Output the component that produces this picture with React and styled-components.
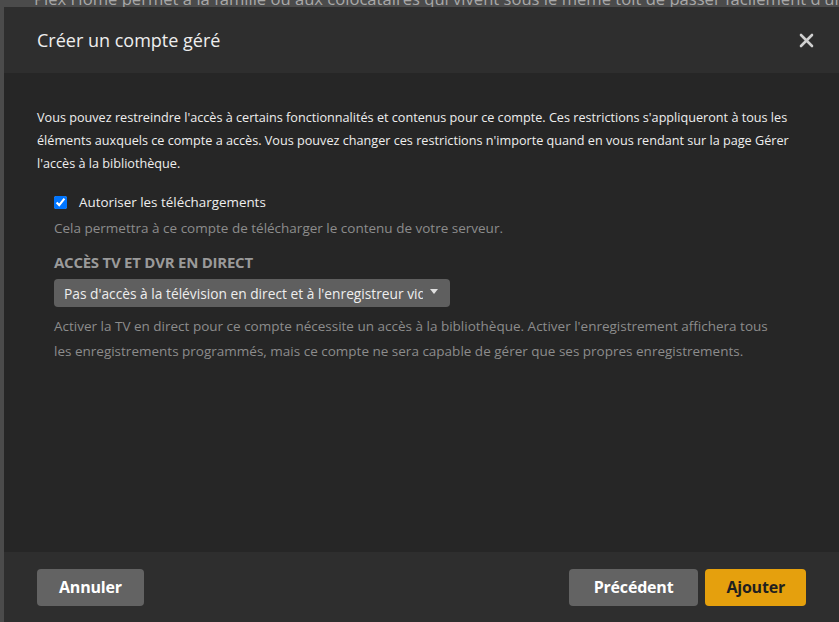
import styled, { createGlobalStyle } from "styled-components";

const GlobalStyle = createGlobalStyle`
  html, body {
    margin: 0;
    padding: 0;
    background: #4b4b4b;
    overflow: hidden;
  }
  body {
    font-family: "Open Sans", "Noto Sans", sans-serif;
  }
`;

const Page = styled.div`
  width: 839px;
  height: 622px;
  display: flex;
  flex-direction: column;
  background: #4b4b4b;
  overflow: hidden;
`;

const Backdrop = styled.div`
  height: 7px;
  overflow: hidden;
  padding-left: 34px;
  color: #a8a8a8;
  font-size: 16.6px;
  line-height: 16px;
  white-space: nowrap;

  span {
    display: block;
    margin-top: -9px;
  }
`;

const Modal = styled.div`
  flex: 1;
  margin-left: 4px;
  display: flex;
  flex-direction: column;
  background: #262626;
  min-height: 0;
`;

const Header = styled.div`
  height: 66px;
  flex-shrink: 0;
  display: flex;
  align-items: center;
  justify-content: space-between;
  padding: 0 24px 0 33px;
  background: #2e2e2e;
`;

const Title = styled.h2`
  margin: 0;
  font-size: 18px;
  font-weight: 400;
  color: #eeeeee;
`;

const CloseButton = styled.button`
  border: 0;
  background: none;
  padding: 0;
  width: 18px;
  height: 18px;
  display: flex;
  align-items: center;
  justify-content: center;
  cursor: pointer;
`;

const Body = styled.div`
  flex: 1;
  padding: 33px 33px 0 33px;
`;

const Intro = styled.p`
  margin: 0;
  font-size: 12.65px;
  line-height: 23px;
  color: #eeeeee;
`;

const Section = styled.div`
  padding-left: 17px;
`;

const CheckRow = styled.label`
  display: flex;
  align-items: center;
  gap: 12px;
  margin-top: 17px;
  height: 20px;
  font-size: 13.4px;
  color: #eeeeee;
`;

const Checkbox = styled.input`
  margin: 0;
  width: 13px;
  height: 13px;
  accent-color: #0075ff;
`;

const Hint = styled.p`
  margin: ${(p) => p.$top || 0}px 0 0;
  max-width: ${(p) => p.$max || 760}px;
  font-size: 13.5px;
  line-height: ${(p) => p.$lh || 22}px;
  color: #8c8c8c;
`;

const Heading = styled.h3`
  margin: 13px 0 0;
  font-size: 15px;
  line-height: 20px;
  font-weight: 700;
  letter-spacing: -0.25px;
  color: #9a9a9a;
  text-transform: uppercase;
`;

const Select = styled.div`
  margin-top: 7px;
  width: 396px;
  height: 28px;
  box-sizing: border-box;
  display: flex;
  align-items: center;
  gap: 7px;
  padding: 0 10px 0 10px;
  border-radius: 4px;
  background: #5f5f5f;
  color: #eeeeee;
  font-size: 13.75px;
  cursor: pointer;
`;

const SelectText = styled.span`
  flex: 1;
  overflow: hidden;
  white-space: nowrap;
`;

const Caret = styled.span`
  width: 0;
  height: 0;
  border-left: 4px solid transparent;
  border-right: 4px solid transparent;
  border-top: 5px solid #e0e0e0;
  margin-bottom: 4px;
  margin-right: 2px;
`;

const Footer = styled.div`
  height: 70px;
  flex-shrink: 0;
  display: flex;
  align-items: center;
  justify-content: space-between;
  padding: 0 33px;
  background: #2e2e2e;
`;

const Group = styled.div`
  display: flex;
  gap: 7px;
`;

const Button = styled.button`
  height: 37px;
  padding: 0 ${(p) => p.$pad || 22}px;
  border: 0;
  border-radius: 4px;
  background: ${(p) => (p.$primary ? "#e5a00d" : "#636363")};
  color: ${(p) => (p.$primary ? "#1f1f1f" : "#ffffff")};
  font-family: "Open Sans", sans-serif;
  font-size: 16px;
  font-weight: 700;
  letter-spacing: -0.2px;
  cursor: pointer;
`;

export default function App() {
  return (
    <>
      <GlobalStyle />
      <Page>
        <Backdrop>
          <span>
            Plex Home permet à la famille ou aux colocataires qui vivent sous le même toit de passer facilement d'un compte à l'autre
          </span>
        </Backdrop>
        <Modal>
          <Header>
            <Title>Créer un compte géré</Title>
            <CloseButton aria-label="Fermer">
              <svg width="15" height="15" viewBox="0 0 15 15">
                <path d="M2 2 L13 13 M13 2 L2 13" stroke="#d0d0d0" strokeWidth="2.6" strokeLinecap="round" />
              </svg>
            </CloseButton>
          </Header>
          <Body>
            <Intro>
              Vous pouvez restreindre l'accès à certains fonctionnalités et contenus pour ce compte. Ces restrictions s'appliqueront à tous les éléments auxquels ce compte a accès. Vous pouvez changer ces restrictions n'importe quand en vous rendant sur la page Gérer l'accès à la bibliothèque.
            </Intro>
            <Section>
              <CheckRow>
                <Checkbox type="checkbox" defaultChecked />
                Autoriser les téléchargements
              </CheckRow>
              <Hint $top={5}>Cela permettra à ce compte de télécharger le contenu de votre serveur.</Hint>
              <Heading>Accès TV et DVR en direct</Heading>
              <Select>
                <SelectText>Pas d'accès à la télévision en direct et à l'enregistreur vidéo numérique</SelectText>
                <Caret />
              </Select>
              <Hint $top={7} $max={725} $lh={25}>
                Activer la TV en direct pour ce compte nécessite un accès à la bibliothèque. Activer l'enregistrement affichera tous les enregistrements programmés, mais ce compte ne sera capable de gérer que ses propres enregistrements.
              </Hint>
            </Section>
          </Body>
          <Footer>
            <Button $pad={22}>Annuler</Button>
            <Group>
              <Button $pad={25}>Précédent</Button>
              <Button $primary $pad={21}>Ajouter</Button>
            </Group>
          </Footer>
        </Modal>
      </Page>
    </>
  );
}
